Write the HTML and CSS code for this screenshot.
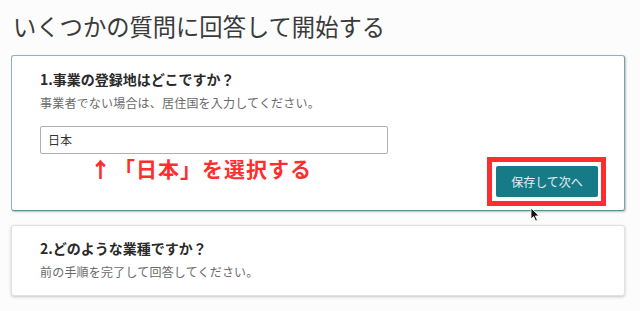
FILE: index.html
```html
<!DOCTYPE html>
<html lang="ja">
<head>
<meta charset="utf-8">
<link rel="stylesheet" href="styles.css">
</head>
<body>
<h1 class="page-title">いくつかの質問に回答して開始する</h1>
<section class="card card-active">
  <h2 class="q-title">1.事業の登録地はどこですか？</h2>
  <p class="q-sub">事業者でない場合は、居住国を入力してください。</p>
  <div class="input">日本</div>
  <div class="action-row">
    <div class="note"><span class="arrow">↑</span>「日本」を選択する</div>
    <div class="highlight">
      <button class="btn">保存して次へ</button>
    </div>
  </div>
  <svg class="cursor" width="10" height="15" viewBox="0 0 10 15"><path d="M1 1 L1 12 L3.6 9.6 L5.6 14 L7.4 13.2 L5.4 8.9 L9 8.9 Z" fill="#111" stroke="#fff" stroke-width="0.8"/></svg>
</section>
<section class="card card-idle">
  <h2 class="q-title">2.どのような業種ですか？</h2>
  <p class="q-sub">前の手順を完了して回答してください。</p>
</section>
</body>
</html>
```
FILE: styles.css
```css
* { box-sizing: border-box; }
html, body { margin: 0; padding: 0; background: #fcfcfc; }
body {
  width: 640px;
  height: 311px;
  overflow: hidden;
  font-family: "Noto Sans CJK JP", "Noto Sans", sans-serif;
  padding: 8px 0 0 11px;
}
.page-title {
  margin: 0 0 10px 2px;
  font-size: 23.3px;
  line-height: 36px;
  height: 37px;
  font-weight: 400;
  color: #3a3a3a;
}
.card {
  width: 614px;
  background: #fff;
  border-radius: 3px;
  position: relative;
  padding-left: 28px;
  padding-right: 18px;
}
.card-active {
  height: 156px;
  border: 1px solid #8db3bb;
  border-bottom-color: #5f8d96;
  border-right-color: #7aa1a9;
  box-shadow: 1px 1px 2px rgba(0,0,0,0.25);
  padding-top: 13px;
}
.card-idle {
  margin-top: 14px;
  height: 71px;
  border: 1px solid #e2e2e2;
  box-shadow: 0 1px 3px rgba(0,0,0,0.22);
  padding-top: 12px;
}
.q-title {
  margin: 0;
  font-size: 14px;
  line-height: 20px;
  font-weight: 700;
  color: #2a2a2a;
}
.q-sub {
  margin: 5px 0 0;
  font-size: 12px;
  line-height: 18px;
  color: #6a6a6a;
  letter-spacing: 0.2px;
}
.input {
  margin-top: 14px;
  width: 348px;
  height: 28px;
  border: 1px solid #b0b0b0;
  border-radius: 2px;
  padding-left: 7px;
  font-size: 12px;
  line-height: 26px;
  color: #333;
}
.action-row {
  display: flex;
  justify-content: space-between;
  align-items: flex-start;
  margin-top: 2px;
}
.note {
  margin-left: 50px;
  font-size: 21px;
  line-height: 24px;
  font-weight: 700;
  color: #ff2e2e;
  letter-spacing: 1px;
}
.arrow {
  font-weight: 900;
  margin-right: 2px;
}
.highlight {
  margin-top: 1px;
  border: 5px solid #ff2e2e;
  padding: 4px 3px 3px 4px;
  width: 119px;
  height: 49px;
}
.btn {
  display: block;
  width: 102px;
  height: 31px;
  border: none;
  border-radius: 2px;
  background: #177a87;
  color: #e4f1f3;
  font-family: inherit;
  font-size: 12px;
  padding: 0;
}
.cursor {
  position: absolute;
  left: 518px;
  top: 151px;
}
```
